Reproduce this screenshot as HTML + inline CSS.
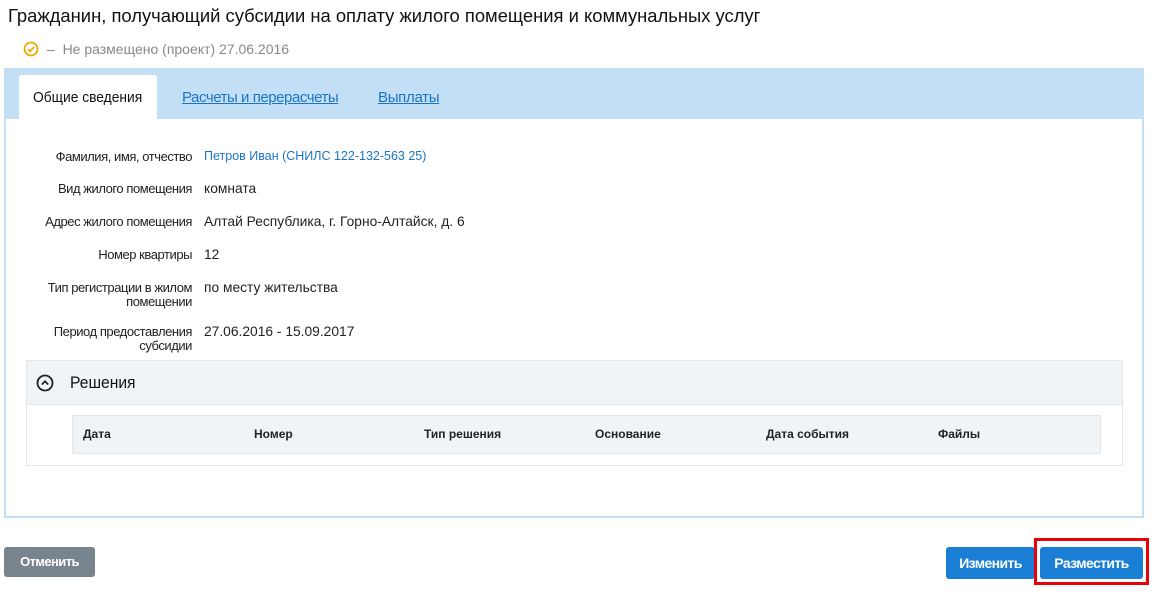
<!DOCTYPE html>
<html><head><meta charset="utf-8"><style>
*{margin:0;padding:0;box-sizing:border-box}
body{width:1159px;height:595px;background:#fff;font-family:"Liberation Sans",Arial,sans-serif;position:relative;overflow:hidden;color:#222}
.a{position:absolute;white-space:nowrap}
.c{display:inline-block;transform-origin:left center}
.u{text-decoration:underline}
.lbl{position:absolute;right:967px;text-align:right;font-size:13px;line-height:14px;color:#222;letter-spacing:-0.45px}
.val{position:absolute;left:204px;font-size:13.8px;color:#222}
.th{position:absolute;top:427px;font-size:12px;font-weight:bold;color:#222}
.btn{position:absolute;border-radius:3px;color:#fff;font-size:14px;font-weight:bold;text-align:center;letter-spacing:-0.6px}
</style></head><body>
<div class="a" style="left:8px;top:5px;font-size:18.4px;color:#111">Гражданин, получающий субсидии на оплату жилого помещения и коммунальных услуг</div>
<svg class="a" style="left:23px;top:41px" width="16" height="16" viewBox="0 0 16 16"><circle cx="8" cy="8" r="6.5" fill="none" stroke="#f0a800" stroke-width="1.8"/><path d="M5 8.2l2 2 4-4.2" fill="none" stroke="#f0a800" stroke-width="1.8"/></svg>
<div class="a" style="left:47px;top:41px;font-size:14px;color:#888">–&nbsp; Не размещено (проект) 27.06.2016</div>
<div class="a" style="left:4px;top:68px;width:1140px;height:450px;border:2px solid #c3dff5;background:#fff"></div>
<div class="a" style="left:4px;top:68px;width:1140px;height:51px;background:#c3dff5"></div>
<div class="a" style="left:19px;top:75px;width:138px;height:44px;background:#fff;border-radius:3px 3px 0 0"></div>
<div class="a" style="left:33px;top:89px;font-size:15px;color:#111"><span class="c" style="transform:scaleX(0.92)">Общие сведения</span></div>
<div class="a" style="left:182px;top:89px;font-size:15px;color:#1a75c4;letter-spacing:-0.45px"><span class="u">Расчеты и перерасчеты</span></div>
<div class="a" style="left:378px;top:89px;font-size:15px;color:#1a75c4;letter-spacing:-0.3px"><span class="u">Выплаты</span></div>

<div class="lbl" style="top:150px">Фамилия, имя, отчество</div>
<div class="val" style="top:149px;font-size:12.5px;color:#1a75c4">Петров Иван (СНИЛС 122-132-563 25)</div>
<div class="lbl" style="top:182px">Вид жилого помещения</div>
<div class="val" style="top:181px">комната</div>
<div class="lbl" style="top:215px">Адрес жилого помещения</div>
<div class="val" style="top:214px">Алтай Республика, г. Горно-Алтайск, д. 6</div>
<div class="lbl" style="top:248px">Номер квартиры</div>
<div class="val" style="top:247px">12</div>
<div class="lbl" style="top:281px">Тип регистрации в жилом<br>помещении</div>
<div class="val" style="top:280px">по месту жительства</div>
<div class="lbl" style="top:325px">Период предоставления<br>субсидии</div>
<div class="val" style="top:324px">27.06.2016 - 15.09.2017</div>

<div class="a" style="left:26px;top:360px;width:1097px;height:106px;border:1px solid #e3e7ea"></div>
<div class="a" style="left:27px;top:361px;width:1095px;height:44px;background:#f0f4f7;border-bottom:1px solid #e3e7ea"></div>
<svg class="a" style="left:36px;top:374px" width="18" height="18" viewBox="0 0 18 18"><circle cx="9" cy="9" r="7.5" fill="none" stroke="#222" stroke-width="1.8"/><path d="M5.8 10.5L9 7.3l3.2 3.2" fill="none" stroke="#222" stroke-width="1.8"/></svg>
<div class="a" style="left:70px;top:373px;font-size:17px;color:#111"><span class="c" style="transform:scaleX(0.92)">Решения</span></div>
<div class="a" style="left:72px;top:415px;width:1029px;height:39px;background:#f0f4f7;border:1px solid #e3e7ea"></div>
<div class="th" style="left:83px">Дата</div>
<div class="th" style="left:254px">Номер</div>
<div class="th" style="left:424px">Тип решения</div>
<div class="th" style="left:595px">Основание</div>
<div class="th" style="left:766px">Дата события</div>
<div class="th" style="left:938px">Файлы</div>

<div class="btn" style="left:4px;top:547px;width:91px;height:30px;line-height:30px;background:#78848e;font-size:13px">Отменить</div>
<div class="btn" style="left:946px;top:547px;width:89px;height:32px;line-height:32px;background:#1a7fd4">Изменить</div>
<div class="a" style="left:1034px;top:538px;width:115px;height:47px;border:3px solid #e8000b"></div>
<div class="btn" style="left:1040px;top:547px;width:103px;height:32px;line-height:32px;background:#1a7fd4">Разместить</div>
</body></html>
